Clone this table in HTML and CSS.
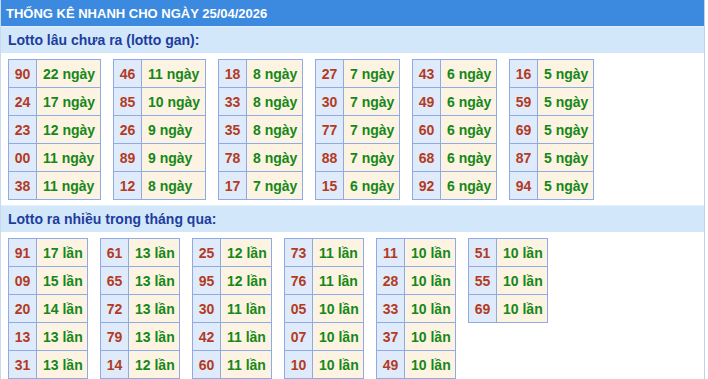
FILE: index.html
```html
<!DOCTYPE html>
<html lang="vi">
<head>
<meta charset="utf-8">
<title>Thống kê nhanh</title>
<link rel="stylesheet" href="styles.css">
</head>
<body>
<div class="box">
  <div class="head">THỐNG KÊ NHANH CHO NGÀY 25/04/2026</div>
  <div class="title">Lotto lâu chưa ra (lotto gan):</div>
  <div class="grid gan">
    <table class="tb wide"><tr><td class="n">90</td><td class="v">22 ngày</td></tr><tr><td class="n">24</td><td class="v">17 ngày</td></tr><tr><td class="n">23</td><td class="v">12 ngày</td></tr><tr><td class="n">00</td><td class="v">11 ngày</td></tr><tr><td class="n">38</td><td class="v">11 ngày</td></tr></table>
    <table class="tb wide"><tr><td class="n">46</td><td class="v">11 ngày</td></tr><tr><td class="n">85</td><td class="v">10 ngày</td></tr><tr><td class="n">26</td><td class="v">9 ngày</td></tr><tr><td class="n">89</td><td class="v">9 ngày</td></tr><tr><td class="n">12</td><td class="v">8 ngày</td></tr></table>
    <table class="tb"><tr><td class="n">18</td><td class="v">8 ngày</td></tr><tr><td class="n">33</td><td class="v">8 ngày</td></tr><tr><td class="n">35</td><td class="v">8 ngày</td></tr><tr><td class="n">78</td><td class="v">8 ngày</td></tr><tr><td class="n">17</td><td class="v">7 ngày</td></tr></table>
    <table class="tb"><tr><td class="n">27</td><td class="v">7 ngày</td></tr><tr><td class="n">30</td><td class="v">7 ngày</td></tr><tr><td class="n">77</td><td class="v">7 ngày</td></tr><tr><td class="n">88</td><td class="v">7 ngày</td></tr><tr><td class="n">15</td><td class="v">6 ngày</td></tr></table>
    <table class="tb"><tr><td class="n">43</td><td class="v">6 ngày</td></tr><tr><td class="n">49</td><td class="v">6 ngày</td></tr><tr><td class="n">60</td><td class="v">6 ngày</td></tr><tr><td class="n">68</td><td class="v">6 ngày</td></tr><tr><td class="n">92</td><td class="v">6 ngày</td></tr></table>
    <table class="tb"><tr><td class="n">16</td><td class="v">5 ngày</td></tr><tr><td class="n">59</td><td class="v">5 ngày</td></tr><tr><td class="n">69</td><td class="v">5 ngày</td></tr><tr><td class="n">87</td><td class="v">5 ngày</td></tr><tr><td class="n">94</td><td class="v">5 ngày</td></tr></table>
  </div>
  <div class="title">Lotto ra nhiều trong tháng qua:</div>
  <div class="grid lan">
    <table class="tb"><tr><td class="n">91</td><td class="v">17 lần</td></tr><tr><td class="n">09</td><td class="v">15 lần</td></tr><tr><td class="n">20</td><td class="v">14 lần</td></tr><tr><td class="n">13</td><td class="v">13 lần</td></tr><tr><td class="n">31</td><td class="v">13 lần</td></tr></table>
    <table class="tb"><tr><td class="n">61</td><td class="v">13 lần</td></tr><tr><td class="n">65</td><td class="v">13 lần</td></tr><tr><td class="n">72</td><td class="v">13 lần</td></tr><tr><td class="n">79</td><td class="v">13 lần</td></tr><tr><td class="n">14</td><td class="v">12 lần</td></tr></table>
    <table class="tb"><tr><td class="n">25</td><td class="v">12 lần</td></tr><tr><td class="n">95</td><td class="v">12 lần</td></tr><tr><td class="n">30</td><td class="v">11 lần</td></tr><tr><td class="n">42</td><td class="v">11 lần</td></tr><tr><td class="n">60</td><td class="v">11 lần</td></tr></table>
    <table class="tb"><tr><td class="n">73</td><td class="v">11 lần</td></tr><tr><td class="n">76</td><td class="v">11 lần</td></tr><tr><td class="n">05</td><td class="v">10 lần</td></tr><tr><td class="n">07</td><td class="v">10 lần</td></tr><tr><td class="n">10</td><td class="v">10 lần</td></tr></table>
    <table class="tb"><tr><td class="n">11</td><td class="v">10 lần</td></tr><tr><td class="n">28</td><td class="v">10 lần</td></tr><tr><td class="n">33</td><td class="v">10 lần</td></tr><tr><td class="n">37</td><td class="v">10 lần</td></tr><tr><td class="n">49</td><td class="v">10 lần</td></tr></table>
    <table class="tb"><tr><td class="n">51</td><td class="v">10 lần</td></tr><tr><td class="n">55</td><td class="v">10 lần</td></tr><tr><td class="n">69</td><td class="v">10 lần</td></tr></table>
  </div>
</div>
</body>
</html>
```
FILE: styles.css
```css
html, body {
  margin: 0;
  padding: 0;
  background: #ffffff;
}
.box {
  width: 705px;
  box-sizing: border-box;
  border-left: 1px solid #c9d8ea;
  border-right: 1px solid #c2d2e6;
  font-family: "Liberation Sans", Arial, sans-serif;
  font-weight: bold;
}
.head {
  height: 26px;
  line-height: 27px;
  padding-left: 5px;
  background: #3c8ae0;
  color: #ffffff;
  font-size: 13px;
}
.title {
  height: 27px;
  line-height: 27px;
  padding-left: 7px;
  background: #d3e7fb;
  color: #1d3d9d;
  font-size: 14px;
  border-top: 1px solid #e4f0fc;
  box-sizing: border-box;
}
.grid {
  display: flex;
  align-items: flex-start;
  gap: 12px;
  padding: 6px 7px 5px;
}
.tb {
  border-collapse: collapse;
  font-size: 14px;
}
.tb td {
  border: 1px solid #8fabe4;
  height: 27px;
  white-space: nowrap;
}
.tb .n {
  background: #dfeafb;
  color: #b33b1f;
  text-align: center;
  width: 27px;
  padding: 0;
}
.tb .v {
  background: #fdf3e3;
  color: #158817;
  text-align: left;
  padding: 0 0 0 6px;
}
.gan .v {
  width: 49px;
}
.gan .wide .v {
  width: 57px;
}
.lan .v {
  width: 44px;
}
```
